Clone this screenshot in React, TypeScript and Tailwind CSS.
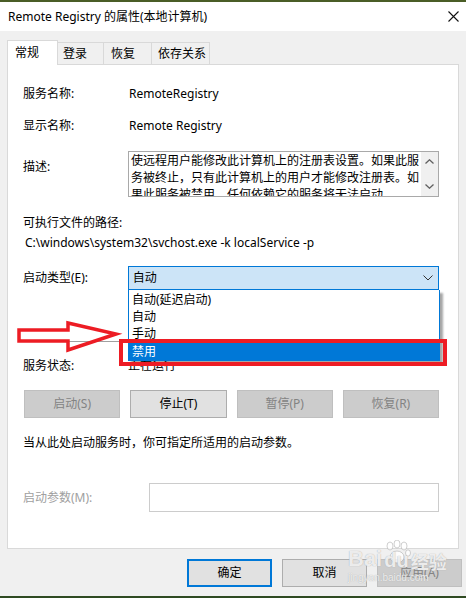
export default function App() {
  const descLines = [
    '使远程用户能修改此计算机上的注册表设置。如果此服',
    '务被终止，只有此计算机上的用户才能修改注册表。如',
    '果此服务被禁用，任何依赖它的服务将无法启动。',
  ]

  return (
    <div className="relative w-[466px] h-[598px] overflow-hidden bg-[#f0f0f0] text-[12px] leading-[20px] text-black font-['Noto_Sans','Noto_Sans_CJK_SC',sans-serif] flex flex-col">
      {/* desktop edge */}
      <div className="h-[2px] bg-[#4a5d26]" />

      {/* title bar */}
      <div className="h-[29px] bg-white flex items-center justify-between pl-[8px] pr-[6px]">
        <span>Remote Registry 的属性(本地计算机)</span>
        <svg width="11" height="11" viewBox="0 0 11 11" className="mr-[1px]">
          <path d="M0.5 0.5 L10.5 10.5 M10.5 0.5 L0.5 10.5" stroke="#111" strokeWidth="1.1" />
        </svg>
      </div>

      {/* tabs */}
      <div className="mt-[9px] pl-[7px] flex items-end">
        <div className="relative z-10 -mb-px h-[25px] w-[51px] bg-white border border-b-0 border-[#d9d9d9] pl-[7px] flex items-center">
          常规
        </div>
        <div className="h-[22px] w-[46px] border border-l-0 border-b-0 border-[#d9d9d9] pl-[5px] flex items-center">登录</div>
        <div className="h-[22px] w-[48px] border border-l-0 border-b-0 border-[#d9d9d9] pl-[7px] flex items-center">恢复</div>
        <div className="h-[22px] w-[58px] border border-l-0 border-b-0 border-[#d9d9d9] pl-[6px] flex items-center">依存关系</div>
      </div>

      {/* panel */}
      <div className="mx-[7px] h-[485px] bg-white border border-[#d9d9d9] pl-[15px] pr-[19px] flex flex-col">
        <div className="mt-[19px] h-[20px] flex items-center">
          <span className="w-[106px]">服务名称:</span>
          <span>RemoteRegistry</span>
        </div>
        <div className="mt-[12px] h-[20px] flex items-center">
          <span className="w-[106px]">显示名称:</span>
          <span>Remote Registry</span>
        </div>

        <div className="mt-[15px] flex">
          <span className="w-[105px] pt-[6px]">描述:</span>
          <div className="w-[311px] h-[46px] border border-[#a9a9a9] flex overflow-hidden">
            <div className="flex-1 pl-[2px] leading-[17px] overflow-hidden">
              {descLines.map((l) => (
                <div key={l} className="whitespace-nowrap">{l}</div>
              ))}
            </div>
            <div className="w-[17px] bg-[#f0f0f0] flex flex-col items-center justify-between py-[7px]">
              <svg width="9" height="5" viewBox="0 0 9 5">
                <path d="M0.5 4.5 L4.5 0.8 L8.5 4.5" fill="none" stroke="#606060" strokeWidth="1.3" />
              </svg>
              <svg width="9" height="5" viewBox="0 0 9 5">
                <path d="M0.5 0.5 L4.5 4.2 L8.5 0.5" fill="none" stroke="#606060" strokeWidth="1.3" />
              </svg>
            </div>
          </div>
        </div>

        <div className="mt-[16px] h-[20px] flex items-center">可执行文件的路径:</div>
        <div className="h-[20px] pl-[2px] flex items-center">C:\windows\system32\svchost.exe -k localService -p</div>

        <div className="mt-[13px] flex items-center">
          <span className="w-[105px]">启动类型(E):</span>
          <div className="w-[312px] h-[24px] border border-[#0078d7] bg-[#cce4f7] pl-[4px] pr-[5px] flex items-center justify-between">
            <span>自动</span>
            <svg width="10" height="6" viewBox="0 0 10 6">
              <path d="M0.5 0.5 L5 5 L9.5 0.5" fill="none" stroke="#333" strokeWidth="1" />
            </svg>
          </div>
        </div>

        <div className="mt-[51px] h-px w-[417px] bg-[#a0a0a0]" />

        <div className="mt-[14px] h-[20px] flex items-center">
          <span className="w-[105px]">服务状态:</span>
          <span>正在运行</span>
        </div>

        <div className="mt-[14px] ml-[1px] w-[415px] grid grid-cols-4 gap-[10px]">
          <div className="h-[28px] bg-[#cccccc] border border-[#bfbfbf] text-[#838383] flex items-center justify-center">启动(S)</div>
          <div className="h-[28px] bg-[#e1e1e1] border border-[#adadad] flex items-center justify-center">停止(T)</div>
          <div className="h-[28px] bg-[#cccccc] border border-[#bfbfbf] text-[#838383] flex items-center justify-center">暂停(P)</div>
          <div className="h-[28px] bg-[#cccccc] border border-[#bfbfbf] text-[#838383] flex items-center justify-center">恢复(R)</div>
        </div>

        <div className="mt-[15px] h-[20px] flex items-center">当从此处启动服务时，你可指定所适用的启动参数。</div>

        <div className="mt-[30px] flex items-center">
          <span className="w-[126px] text-[#a0a0a0]">启动参数(M):</span>
          <div className="w-[291px] h-[29px] border border-[#cccccc] bg-white" />
        </div>
      </div>

      {/* dialog buttons */}
      <div className="mt-[10px] pr-[4px] flex justify-end gap-[10px]">
        <div className="w-[85px] h-[28px] bg-[#e1e1e1] border-2 border-[#0078d7] flex items-center justify-center">确定</div>
        <div className="w-[85px] h-[28px] bg-[#e1e1e1] border border-[#adadad] flex items-center justify-center">取消</div>
        <div className="w-[85px] h-[28px] bg-[#cccccc] border border-[#bfbfbf] text-[#838383] flex items-center justify-center">应用(A)</div>
      </div>

      <div className="mt-auto h-[2px] bg-[#2f4a22]" />

      {/* open dropdown list */}
      <div className="absolute left-[128px] top-[290px] w-[312px] bg-white border-x border-[#0078d7] shadow-[3px_3px_2px_rgba(0,0,0,0.35)]">
        <div className="h-[17px] mt-px pl-[3px] leading-[17px]">自动(延迟启动)</div>
        <div className="h-[17px] pl-[3px] leading-[17px]">自动</div>
        <div className="h-[17px] pl-[3px] leading-[17px]">手动</div>
        <div className="h-[19px] pl-[3px] leading-[19px] bg-[#0078d7] text-white">禁用</div>
      </div>

      {/* annotation: red arrow */}
      <svg className="absolute left-0 top-[315px]" width="125" height="45" viewBox="0 315 125 45">
        <polygon
          points="19,330 68,330 68,323 116,334 68,350 68,341 19,341"
          fill="none"
          stroke="#ed1c24"
          strokeWidth="3.5"
          strokeLinejoin="miter"
        />
      </svg>

      {/* annotation: red box */}
      <div className="absolute left-[119px] top-[339px] w-[328px] h-[27px] border-4 border-[#ed1c24]" />

      {/* watermark */}
      <div className="absolute left-[348px] top-[540px] text-white/80 [text-shadow:0_0_1px_#9a9a9a] leading-none pointer-events-none">
        <svg className="absolute left-[34px] top-0" width="30" height="26" viewBox="0 0 30 26" opacity="0.8">
          <g fill="#ffffff" stroke="#b5b5b5" strokeWidth="0.8">
            <ellipse cx="8" cy="6" rx="3" ry="4" />
            <ellipse cx="15" cy="4" rx="3" ry="4" />
            <ellipse cx="22" cy="6" rx="3" ry="4" />
            <ellipse cx="26" cy="13" rx="2.5" ry="3.2" />
            <ellipse cx="15" cy="17" rx="7" ry="6" />
          </g>
        </svg>
        <div className="relative mt-[8px] flex items-end gap-[2px] font-['Liberation_Sans',sans-serif] font-bold text-[22px]">
          <span>Bai</span>
          <span className="text-[20px]">du</span>
          <span className="font-['Noto_Sans_CJK_SC',sans-serif] text-[18px]">经验</span>
        </div>
        <div className="mt-[3px] text-[10px] font-['Liberation_Sans',sans-serif]">jingyan.baidu.com</div>
      </div>
    </div>
  )
}
